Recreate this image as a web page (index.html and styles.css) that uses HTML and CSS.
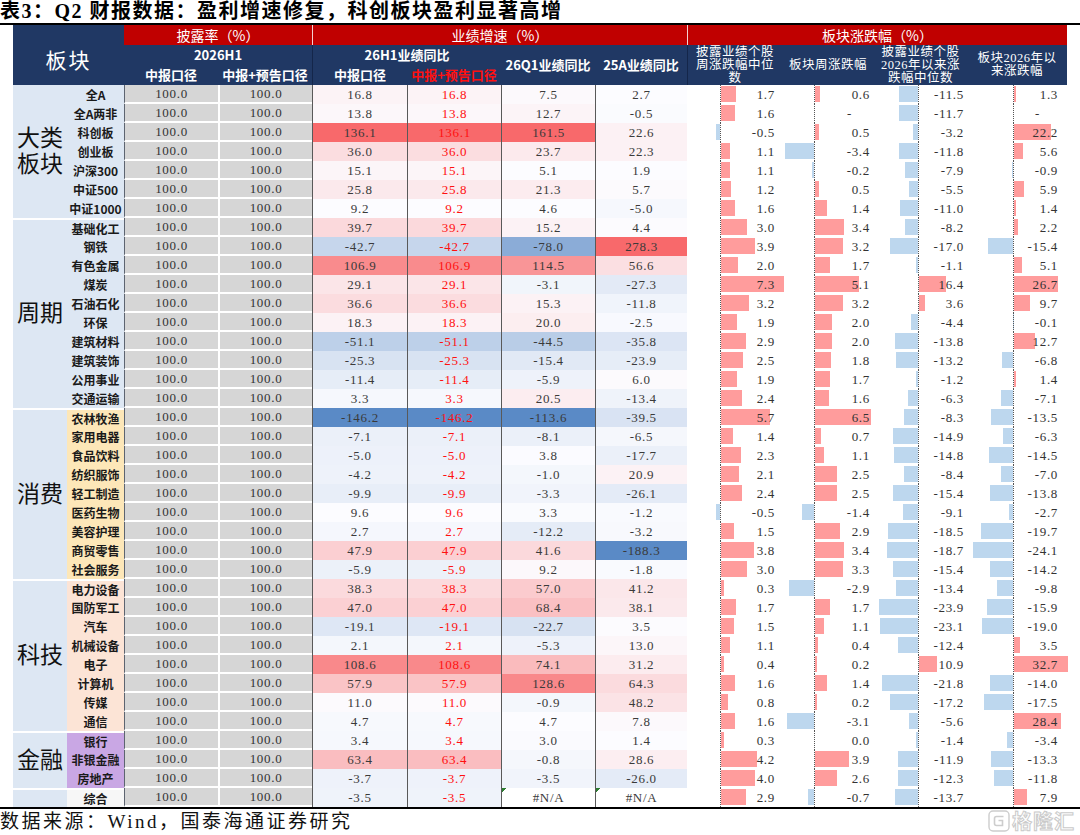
FILE: index.html
```html
<!DOCTYPE html>
<html lang="zh-CN">
<head>
<meta charset="utf-8">
<title>表3</title>
<link rel="stylesheet" href="styles.css">
</head>
<body>
<div class="title">表3：Q2 财报数据：盈利增速修复，科创板块盈利显著高增</div>
<table class="tbl">
<colgroup>
<col style="width:54px"><col style="width:57px"><col style="width:94px"><col style="width:94px"><col style="width:95px"><col style="width:94px"><col style="width:94px"><col style="width:92px"><col style="width:95px"><col style="width:92px"><col style="width:93px"><col style="width:100px">
</colgroup>
<thead>
<tr class="hr1">
<th class="navy bk" rowspan="3" colspan="2">板块</th>
<th class="red" colspan="2">披露率（%）</th>
<th class="red sepw" colspan="4">业绩增速（%）</th>
<th class="red sepw" colspan="4">板块涨跌幅（%）</th>
</tr>
<tr class="hr2">
<th class="navy" colspan="2">2026H1</th>
<th class="navy sepd" colspan="2">26H1业绩同比</th>
<th class="navy" rowspan="2">26Q1业绩同比</th>
<th class="navy" rowspan="2">25A业绩同比</th>
<th class="navy bh sepd" rowspan="2"><div class="bhd">披露业绩个股<br>周涨跌幅中位<br>数</div></th>
<th class="navy bh" rowspan="2"><div class="bhd">板块周涨跌幅</div></th>
<th class="navy bh" rowspan="2"><div class="bhd">披露业绩个股<br>2026年以来涨<br>跌幅中位数</div></th>
<th class="navy bh" rowspan="2"><div class="bhd">板块2026年以<br>来涨跌幅</div></th>
</tr>
<tr class="hr3">
<th class="navy">中报口径</th>
<th class="navy">中报+预告口径</th>
<th class="navy sepd">中报口径</th>
<th class="navy rtx">中报+预告口径</th>
</tr>
</thead>
<tbody>
<tr class="r gA"><td class="grp" rowspan="7">大类<br>板块</td><td class="nm">全A</td><td class="d">100.0</td><td class="d d2">100.0</td><td class="h g1">16.8</td><td class="h g2">16.8</td><td class="h q1">7.5</td><td class="h a25">2.7</td><td class="b b1">1.7</td><td class="b b2">0.6</td><td class="b b3">-11.5</td><td class="b b4">1.3</td></tr>
<tr class="r gA"><td class="nm">全A两非</td><td class="d">100.0</td><td class="d d2">100.0</td><td class="h g1">13.8</td><td class="h g2">13.8</td><td class="h q1">12.7</td><td class="h a25">-0.5</td><td class="b b1">1.6</td><td class="b b2">-</td><td class="b b3">-11.7</td><td class="b b4">-</td></tr>
<tr class="r gA"><td class="nm">科创板</td><td class="d">100.0</td><td class="d d2">100.0</td><td class="h g1">136.1</td><td class="h g2">136.1</td><td class="h q1">161.5</td><td class="h a25">22.6</td><td class="b b1">-0.5</td><td class="b b2">0.5</td><td class="b b3">-3.2</td><td class="b b4">22.2</td></tr>
<tr class="r gA"><td class="nm">创业板</td><td class="d">100.0</td><td class="d d2">100.0</td><td class="h g1">36.0</td><td class="h g2">36.0</td><td class="h q1">23.7</td><td class="h a25">22.3</td><td class="b b1">1.1</td><td class="b b2">-3.4</td><td class="b b3">-11.8</td><td class="b b4">5.6</td></tr>
<tr class="r gA"><td class="nm">沪深300</td><td class="d">100.0</td><td class="d d2">100.0</td><td class="h g1">15.1</td><td class="h g2">15.1</td><td class="h q1">5.1</td><td class="h a25">1.9</td><td class="b b1">1.1</td><td class="b b2">-0.2</td><td class="b b3">-7.9</td><td class="b b4">-0.9</td></tr>
<tr class="r gA"><td class="nm">中证500</td><td class="d">100.0</td><td class="d d2">100.0</td><td class="h g1">25.8</td><td class="h g2">25.8</td><td class="h q1">21.3</td><td class="h a25">5.7</td><td class="b b1">1.2</td><td class="b b2">0.5</td><td class="b b3">-5.5</td><td class="b b4">5.9</td></tr>
<tr class="r gA"><td class="nm">中证1000</td><td class="d">100.0</td><td class="d d2">100.0</td><td class="h g1">9.2</td><td class="h g2">9.2</td><td class="h q1">4.6</td><td class="h a25">-5.0</td><td class="b b1">1.6</td><td class="b b2">1.4</td><td class="b b3">-11.0</td><td class="b b4">1.4</td></tr>
<tr class="r gC first"><td class="grp" rowspan="10">周期</td><td class="nm">基础化工</td><td class="d">100.0</td><td class="d d2">100.0</td><td class="h g1">39.7</td><td class="h g2">39.7</td><td class="h q1">15.2</td><td class="h a25">4.4</td><td class="b b1">3.0</td><td class="b b2">3.4</td><td class="b b3">-8.2</td><td class="b b4">2.2</td></tr>
<tr class="r gC"><td class="nm">钢铁</td><td class="d">100.0</td><td class="d d2">100.0</td><td class="h g1">-42.7</td><td class="h g2">-42.7</td><td class="h q1">-78.0</td><td class="h a25">278.3</td><td class="b b1">3.9</td><td class="b b2">3.2</td><td class="b b3">-17.0</td><td class="b b4">-15.4</td></tr>
<tr class="r gC"><td class="nm">有色金属</td><td class="d">100.0</td><td class="d d2">100.0</td><td class="h g1">106.9</td><td class="h g2">106.9</td><td class="h q1">114.5</td><td class="h a25">56.6</td><td class="b b1">2.0</td><td class="b b2">1.7</td><td class="b b3">-1.1</td><td class="b b4">5.1</td></tr>
<tr class="r gC"><td class="nm">煤炭</td><td class="d">100.0</td><td class="d d2">100.0</td><td class="h g1">29.1</td><td class="h g2">29.1</td><td class="h q1">-3.1</td><td class="h a25">-27.3</td><td class="b b1">7.3</td><td class="b b2">5.1</td><td class="b b3">16.4</td><td class="b b4">26.7</td></tr>
<tr class="r gC"><td class="nm">石油石化</td><td class="d">100.0</td><td class="d d2">100.0</td><td class="h g1">36.6</td><td class="h g2">36.6</td><td class="h q1">15.3</td><td class="h a25">-11.8</td><td class="b b1">3.2</td><td class="b b2">3.2</td><td class="b b3">3.6</td><td class="b b4">9.7</td></tr>
<tr class="r gC"><td class="nm">环保</td><td class="d">100.0</td><td class="d d2">100.0</td><td class="h g1">18.3</td><td class="h g2">18.3</td><td class="h q1">20.0</td><td class="h a25">-2.5</td><td class="b b1">1.9</td><td class="b b2">2.0</td><td class="b b3">-4.4</td><td class="b b4">-0.1</td></tr>
<tr class="r gC"><td class="nm">建筑材料</td><td class="d">100.0</td><td class="d d2">100.0</td><td class="h g1">-51.1</td><td class="h g2">-51.1</td><td class="h q1">-44.5</td><td class="h a25">-35.8</td><td class="b b1">2.9</td><td class="b b2">2.0</td><td class="b b3">-13.8</td><td class="b b4">12.7</td></tr>
<tr class="r gC"><td class="nm">建筑装饰</td><td class="d">100.0</td><td class="d d2">100.0</td><td class="h g1">-25.3</td><td class="h g2">-25.3</td><td class="h q1">-15.4</td><td class="h a25">-23.9</td><td class="b b1">2.5</td><td class="b b2">1.8</td><td class="b b3">-13.2</td><td class="b b4">-6.8</td></tr>
<tr class="r gC"><td class="nm">公用事业</td><td class="d">100.0</td><td class="d d2">100.0</td><td class="h g1">-11.4</td><td class="h g2">-11.4</td><td class="h q1">-5.9</td><td class="h a25">6.0</td><td class="b b1">1.9</td><td class="b b2">1.7</td><td class="b b3">-1.2</td><td class="b b4">1.4</td></tr>
<tr class="r gC"><td class="nm">交通运输</td><td class="d">100.0</td><td class="d d2">100.0</td><td class="h g1">3.3</td><td class="h g2">3.3</td><td class="h q1">20.5</td><td class="h a25">-13.4</td><td class="b b1">2.4</td><td class="b b2">1.6</td><td class="b b3">-6.3</td><td class="b b4">-7.1</td></tr>
<tr class="r gX first"><td class="grp" rowspan="9">消费</td><td class="nm">农林牧渔</td><td class="d">100.0</td><td class="d d2">100.0</td><td class="h g1">-146.2</td><td class="h g2">-146.2</td><td class="h q1">-113.6</td><td class="h a25">-39.5</td><td class="b b1">5.7</td><td class="b b2">6.5</td><td class="b b3">-8.3</td><td class="b b4">-13.5</td></tr>
<tr class="r gX"><td class="nm">家用电器</td><td class="d">100.0</td><td class="d d2">100.0</td><td class="h g1">-7.1</td><td class="h g2">-7.1</td><td class="h q1">-8.1</td><td class="h a25">-6.5</td><td class="b b1">1.4</td><td class="b b2">0.7</td><td class="b b3">-14.9</td><td class="b b4">-6.3</td></tr>
<tr class="r gX"><td class="nm">食品饮料</td><td class="d">100.0</td><td class="d d2">100.0</td><td class="h g1">-5.0</td><td class="h g2">-5.0</td><td class="h q1">3.8</td><td class="h a25">-17.7</td><td class="b b1">2.3</td><td class="b b2">1.1</td><td class="b b3">-14.8</td><td class="b b4">-14.5</td></tr>
<tr class="r gX"><td class="nm">纺织服饰</td><td class="d">100.0</td><td class="d d2">100.0</td><td class="h g1">-4.2</td><td class="h g2">-4.2</td><td class="h q1">-1.0</td><td class="h a25">20.9</td><td class="b b1">2.1</td><td class="b b2">2.5</td><td class="b b3">-8.4</td><td class="b b4">-7.0</td></tr>
<tr class="r gX"><td class="nm">轻工制造</td><td class="d">100.0</td><td class="d d2">100.0</td><td class="h g1">-9.9</td><td class="h g2">-9.9</td><td class="h q1">-3.3</td><td class="h a25">-26.1</td><td class="b b1">2.4</td><td class="b b2">2.5</td><td class="b b3">-15.4</td><td class="b b4">-13.8</td></tr>
<tr class="r gX"><td class="nm">医药生物</td><td class="d">100.0</td><td class="d d2">100.0</td><td class="h g1">9.6</td><td class="h g2">9.6</td><td class="h q1">3.3</td><td class="h a25">-1.2</td><td class="b b1">-0.5</td><td class="b b2">-1.4</td><td class="b b3">-9.1</td><td class="b b4">-2.7</td></tr>
<tr class="r gX"><td class="nm">美容护理</td><td class="d">100.0</td><td class="d d2">100.0</td><td class="h g1">2.7</td><td class="h g2">2.7</td><td class="h q1">-12.2</td><td class="h a25">-3.2</td><td class="b b1">1.5</td><td class="b b2">2.9</td><td class="b b3">-18.5</td><td class="b b4">-19.7</td></tr>
<tr class="r gX"><td class="nm">商贸零售</td><td class="d">100.0</td><td class="d d2">100.0</td><td class="h g1">47.9</td><td class="h g2">47.9</td><td class="h q1">41.6</td><td class="h a25">-188.3</td><td class="b b1">3.8</td><td class="b b2">3.4</td><td class="b b3">-18.7</td><td class="b b4">-24.1</td></tr>
<tr class="r gX"><td class="nm">社会服务</td><td class="d">100.0</td><td class="d d2">100.0</td><td class="h g1">-5.9</td><td class="h g2">-5.9</td><td class="h q1">9.2</td><td class="h a25">-1.8</td><td class="b b1">3.0</td><td class="b b2">3.3</td><td class="b b3">-15.4</td><td class="b b4">-14.2</td></tr>
<tr class="r gT first"><td class="grp" rowspan="8">科技</td><td class="nm">电力设备</td><td class="d">100.0</td><td class="d d2">100.0</td><td class="h g1">38.3</td><td class="h g2">38.3</td><td class="h q1">57.0</td><td class="h a25">41.2</td><td class="b b1">0.3</td><td class="b b2">-2.9</td><td class="b b3">-13.4</td><td class="b b4">-9.8</td></tr>
<tr class="r gT"><td class="nm">国防军工</td><td class="d">100.0</td><td class="d d2">100.0</td><td class="h g1">47.0</td><td class="h g2">47.0</td><td class="h q1">68.4</td><td class="h a25">38.1</td><td class="b b1">1.7</td><td class="b b2">1.7</td><td class="b b3">-23.9</td><td class="b b4">-15.9</td></tr>
<tr class="r gT"><td class="nm">汽车</td><td class="d">100.0</td><td class="d d2">100.0</td><td class="h g1">-19.1</td><td class="h g2">-19.1</td><td class="h q1">-22.7</td><td class="h a25">3.5</td><td class="b b1">1.5</td><td class="b b2">1.1</td><td class="b b3">-23.1</td><td class="b b4">-19.0</td></tr>
<tr class="r gT"><td class="nm">机械设备</td><td class="d">100.0</td><td class="d d2">100.0</td><td class="h g1">2.1</td><td class="h g2">2.1</td><td class="h q1">-5.3</td><td class="h a25">13.0</td><td class="b b1">1.1</td><td class="b b2">0.4</td><td class="b b3">-12.4</td><td class="b b4">3.5</td></tr>
<tr class="r gT"><td class="nm">电子</td><td class="d">100.0</td><td class="d d2">100.0</td><td class="h g1">108.6</td><td class="h g2">108.6</td><td class="h q1">74.1</td><td class="h a25">31.2</td><td class="b b1">0.4</td><td class="b b2">0.2</td><td class="b b3">10.9</td><td class="b b4">32.7</td></tr>
<tr class="r gT"><td class="nm">计算机</td><td class="d">100.0</td><td class="d d2">100.0</td><td class="h g1">57.9</td><td class="h g2">57.9</td><td class="h q1">128.6</td><td class="h a25">64.3</td><td class="b b1">1.6</td><td class="b b2">1.4</td><td class="b b3">-21.8</td><td class="b b4">-14.0</td></tr>
<tr class="r gT"><td class="nm">传媒</td><td class="d">100.0</td><td class="d d2">100.0</td><td class="h g1">11.0</td><td class="h g2">11.0</td><td class="h q1">-0.9</td><td class="h a25">48.2</td><td class="b b1">0.8</td><td class="b b2">0.2</td><td class="b b3">-17.2</td><td class="b b4">-17.5</td></tr>
<tr class="r gT"><td class="nm">通信</td><td class="d">100.0</td><td class="d d2">100.0</td><td class="h g1">4.7</td><td class="h g2">4.7</td><td class="h q1">4.7</td><td class="h a25">7.8</td><td class="b b1">1.6</td><td class="b b2">-3.1</td><td class="b b3">-5.6</td><td class="b b4">28.4</td></tr>
<tr class="r gF first"><td class="grp" rowspan="3">金融</td><td class="nm">银行</td><td class="d">100.0</td><td class="d d2">100.0</td><td class="h g1">3.4</td><td class="h g2">3.4</td><td class="h q1">3.0</td><td class="h a25">1.4</td><td class="b b1">0.3</td><td class="b b2">0.0</td><td class="b b3">-1.4</td><td class="b b4">-3.4</td></tr>
<tr class="r gF"><td class="nm">非银金融</td><td class="d">100.0</td><td class="d d2">100.0</td><td class="h g1">63.4</td><td class="h g2">63.4</td><td class="h q1">-0.8</td><td class="h a25">28.6</td><td class="b b1">4.2</td><td class="b b2">3.9</td><td class="b b3">-11.9</td><td class="b b4">-13.3</td></tr>
<tr class="r gF"><td class="nm">房地产</td><td class="d">100.0</td><td class="d d2">100.0</td><td class="h g1">-3.7</td><td class="h g2">-3.7</td><td class="h q1">-3.5</td><td class="h a25">-26.0</td><td class="b b1">4.0</td><td class="b b2">2.6</td><td class="b b3">-12.3</td><td class="b b4">-11.8</td></tr>
<tr class="r gZ first"><td class="grp"></td><td class="nm">综合</td><td class="d">100.0</td><td class="d d2">100.0</td><td class="h g1">-3.5</td><td class="h g2">-3.5</td><td class="h q1 na">#N/A</td><td class="h a25 na">#N/A</td><td class="b b1">2.9</td><td class="b b2">-0.7</td><td class="b b3">-13.7</td><td class="b b4">7.9</td></tr>
</tbody>
</table>
<div class="bline"></div>
<div class="src">数据来源：Wind，国泰海通证券研究</div>
<div class="wm">
<svg width="22" height="22" viewBox="0 0 22 22"><rect x="1" y="1" width="20" height="20" rx="4" fill="#fff" stroke="#cdcdcd" stroke-width="1.4"/><path d="M15.5 6.5H8.5a2 2 0 0 0-2 2v5a2 2 0 0 0 2 2h6v-5h-4" fill="none" stroke="#cdcdcd" stroke-width="1.6"/></svg>
<span>格隆汇</span>
</div>
<script src="script.js"></script>
</body>
</html>
```

FILE: styles.css
```css
* { box-sizing: border-box; }
html, body { margin: 0; padding: 0; background: #fff; }
body {
  width: 1080px;
  height: 835px;
  overflow: hidden;
  position: relative;
  font-family: "Liberation Serif", "Noto Sans CJK SC", serif;
  color: #333;
}
.title {
  height: 25px;
  border-bottom: 2px solid #000;
  font: 700 20px/23px "Liberation Serif", "Noto Sans CJK SC", serif;
  letter-spacing: 1.5px;
  color: #000;
  white-space: nowrap;
}
.tbl {
  margin-left: 13px;
  width: 1054px;
  border-collapse: separate;
  border-spacing: 0;
  table-layout: fixed;
}
.tbl th, .tbl td {
  padding: 0;
  overflow: hidden;
  white-space: nowrap;
  text-align: center;
  vertical-align: middle;
}
.hr1 { height: 20px; }
.hr2 { height: 19px; }
.hr3 { height: 21px; }
.red {
  background: #c00000;
  color: #fff;
  font: 400 14px/20px "Noto Sans CJK SC", sans-serif;
}
.sepw { border-left: 1px solid #f3d0d0; }
.navy {
  background: #203864;
  color: #fff;
  font: 700 13px/18px "Noto Sans CJK SC", sans-serif;
}
.sepd { border-left: 1px solid #14264a; }
.bk {
  font: 400 21px/24px "Noto Sans CJK SC", sans-serif;
  letter-spacing: 2px;
  padding-top: 8px !important;
}
.rtx { color: #ff1010; }
.bhd {
  height: 40px;
  overflow: hidden;
  display: flex;
  align-items: center;
  justify-content: center;
  white-space: normal;
  font: 400 12.5px/13px "Liberation Serif", "Noto Sans CJK SC", serif;
  letter-spacing: 0.5px;
}
.r { height: 19px; }
.r td {
  font: 400 13px/17px "Liberation Serif", "Noto Sans CJK SC", serif;
  letter-spacing: 0.7px;
  color: #333;
}
.r td.grp {
  background: #dde7f3;
  font: 400 23px/26px "Liberation Serif", "Noto Sans CJK SC", serif;
  letter-spacing: 0;
  color: #111;
  white-space: normal;
}
.r td.nm {
  font: 700 12px/17px "Noto Sans CJK SC", sans-serif;
  letter-spacing: 0;
  color: #1a1a1a;
}
.gA td.nm, .gC td.nm { background: #dde7f3; }
.gX td.nm { background: #fde7b8; }
.gT td.nm { background: #fce4d6; }
.gF td.nm { background: #c9a7e4; }
.gZ td.nm { background: #f7f7f7; }
.first td.grp, .first td.nm { border-top: 2px solid #fff; }
.r td.d {
  background: #d6d6d6;
  border-bottom: 2px solid #fff;
  border-left: 1px solid #5d6470;
}
.r td.d2 { border-left: 2px solid #fff; }
.r td.h { border-left: 1px solid #595959; background: #fff; color: #3a3a3a; }
.r td.g2 { color: #ff1010; }
.r td.na {
  background: linear-gradient(135deg, #2e7d32 0, #2e7d32 3.5px, transparent 3.5px) no-repeat, #fff;
}
.r td.b { overflow: visible; }
.bw {
  position: relative;
  height: 19px;
  line-height: 19px;
  text-align: right;
}
.bw::before {
  content: "";
  position: absolute;
  top: 0;
  bottom: 0;
  border-left: 1px dotted #555;
  z-index: 2;
}
.b1 .bw { padding-right: 7px; }
.b1 .bw::before { left: 33px; }
.b2 .bw { padding-right: 4px; }
.b2 .bw::before { left: 32px; }
.b3 .bw { padding-right: 3px; }
.b3 .bw::before { left: 44px; }
.b4 .bw { padding-right: 9px; }
.b4 .bw::before { left: 46px; }
.bar {
  position: absolute;
  top: 1px;
  height: 16px;
}
.bar.pos { background: #ff9c9c; }
.bar.neg { background: #bdd7ee; }
.bw span { position: relative; z-index: 1; }
.bw span.dash { padding-right: 18px; }
.bline {
  height: 2px;
  background: #000;
}
.src {
  font: 400 19px/26px "Liberation Serif", "Noto Sans CJK SC", serif;
  letter-spacing: 2.5px;
  color: #111;
  white-space: nowrap;
}
.wm {
  position: absolute;
  top: 810px;
  right: 5px;
  display: flex;
  align-items: center;
  gap: 2px;
}
.wm span {
  font: 700 20px/22px "Noto Sans CJK SC", sans-serif;
  color: #fff;
  -webkit-text-stroke: 1px #cacaca;
  letter-spacing: 1px;
}
```

FILE: script.js
```js
(function () {
  var MIN = [90, 138, 198], MID = [252, 252, 255], MAX = [248, 105, 107];
  function mix(a, b, t) {
    t = Math.max(0, Math.min(1, t));
    return 'rgb(' + a.map(function (x, i) { return Math.round(x + (b[i] - x) * t); }).join(',') + ')';
  }
  ['g1', 'g2', 'q1', 'a25'].forEach(function (c) {
    var cells = Array.prototype.slice.call(document.querySelectorAll('td.' + c));
    var vals = cells.map(function (td) { return parseFloat(td.textContent); })
      .filter(function (v) { return !isNaN(v); });
    var s = vals.slice().sort(function (a, b) { return a - b; });
    var n = s.length, r = 0.5 * (n - 1), lo = Math.floor(r), hi = Math.ceil(r);
    var mid = s[lo] + (s[hi] - s[lo]) * (r - lo);
    var mn = s[0], mx = s[n - 1];
    cells.forEach(function (td) {
      var v = parseFloat(td.textContent);
      if (isNaN(v)) return;
      td.style.backgroundColor = v < mid ? mix(MID, MIN, (mid - v) / (mid - mn)) : mix(MID, MAX, (v - mid) / (mx - mid));
    });
  });
  var cfg = { b1: [33, 8.6], b2: [32, 8.6], b3: [44, 1.65], b4: [46, 1.65] };
  Array.prototype.forEach.call(document.querySelectorAll('td.b'), function (td) {
    var cls = ['b1', 'b2', 'b3', 'b4'].filter(function (c) { return td.classList.contains(c); })[0];
    var ax = cfg[cls][0], k = cfg[cls][1];
    var t = td.textContent.trim();
    var v = parseFloat(t);
    var w = document.createElement('div');
    w.className = 'bw';
    if (!isNaN(v) && v !== 0) {
      var len = Math.abs(v) * k;
      var bar = document.createElement('i');
      bar.className = 'bar ' + (v > 0 ? 'pos' : 'neg');
      bar.style.left = (v > 0 ? ax + 1 : ax - len) + 'px';
      bar.style.width = len + 'px';
      w.appendChild(bar);
    }
    var sp = document.createElement('span');
    sp.textContent = t;
    if (t === '-') sp.className = 'dash';
    w.appendChild(sp);
    td.textContent = '';
    td.appendChild(w);
  });
})();
```
